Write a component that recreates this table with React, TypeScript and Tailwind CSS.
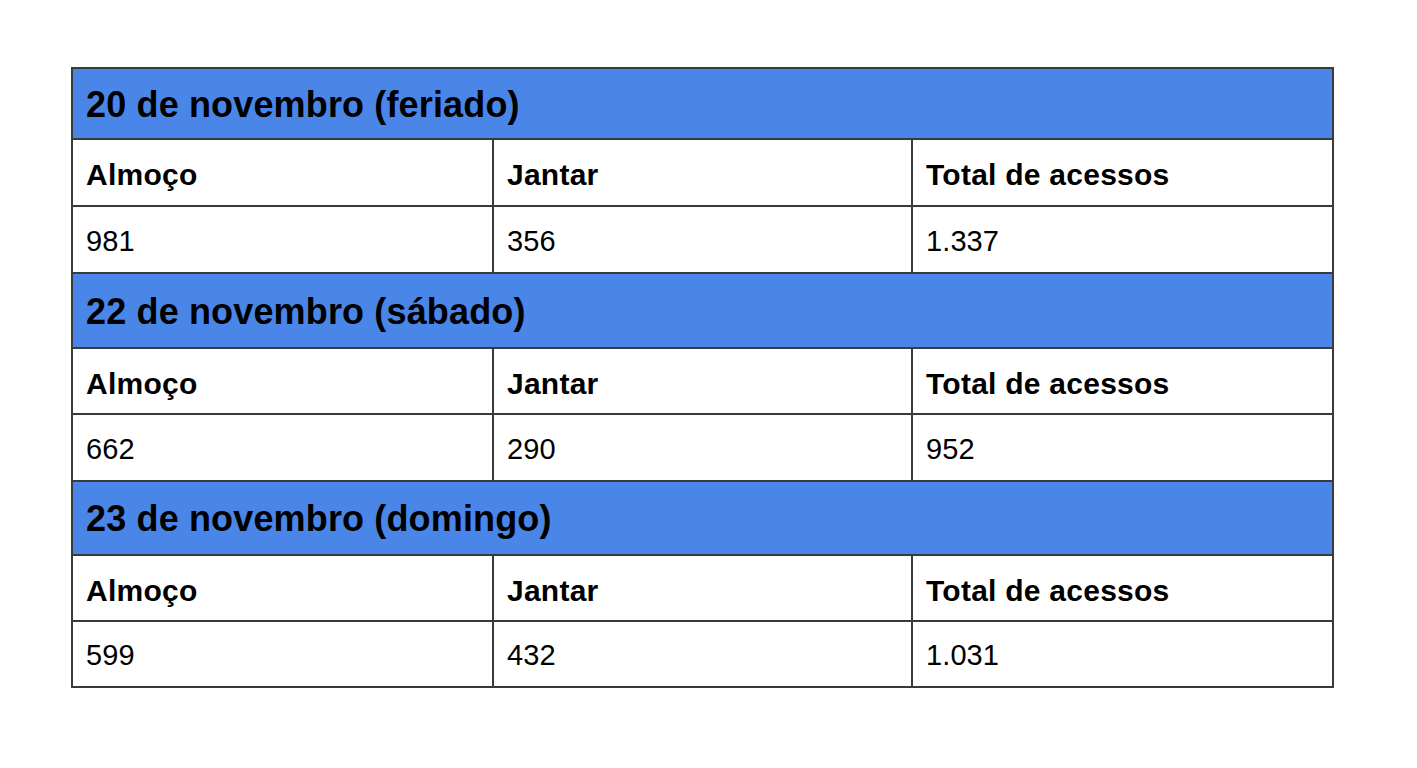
import React from "react";

type Section = { title: string; values: [string, string, string]; h: [number, number, number] };

const sections: Section[] = [
  { title: "20 de novembro (feriado)", values: ["981", "356", "1.337"], h: [71, 67, 67] },
  { title: "22 de novembro (sábado)", values: ["662", "290", "952"], h: [75, 66, 67] },
  { title: "23 de novembro (domingo)", values: ["599", "432", "1.031"], h: [74, 66, 64] },
];

const labels = ["Almoço", "Jantar", "Total de acessos"];

export default function App() {
  return (
    <div className="min-h-screen w-full bg-white" style={{ fontFamily: '"Liberation Sans", Arial, sans-serif' }}>
      <div className="pt-[67px] pl-[71px]">
        <div className="w-[1263px] border-2 border-[#3a3a3a] text-black">
          {sections.map((s, si) => (
            <React.Fragment key={si}>
              <div
                className="flex items-center border-b-2 border-[#3a3a3a] bg-[#4a86e8] pl-[13px] pt-[2px] text-[36px] font-bold tracking-[0.15px]"
                style={{ height: s.h[0] }}
              >
                {s.title}
              </div>
              <div
                className="grid grid-cols-[419px_419px_1fr] border-b-2 border-[#3a3a3a]"
                style={{ height: s.h[1] }}
              >
                {labels.map((l, i) => (
                  <div
                    key={l}
                    className={`flex items-center pl-[13px] pt-[4px] text-[30px] font-bold tracking-[0.25px] ${
                      i > 0 ? "border-l-2 border-[#3a3a3a]" : ""
                    }`}
                  >
                    {l}
                  </div>
                ))}
              </div>
              <div
                className={`grid grid-cols-[419px_419px_1fr] ${
                  si < sections.length - 1 ? "border-b-2 border-[#3a3a3a]" : ""
                }`}
                style={{ height: s.h[2] }}
              >
                {s.values.map((v, i) => (
                  <div
                    key={i}
                    className={`flex items-center pl-[13px] pt-[4px] text-[29px] tracking-[0.1px] ${
                      i > 0 ? "border-l-2 border-[#3a3a3a]" : ""
                    }`}
                  >
                    {v}
                  </div>
                ))}
              </div>
            </React.Fragment>
          ))}
        </div>
      </div>
    </div>
  );
}
